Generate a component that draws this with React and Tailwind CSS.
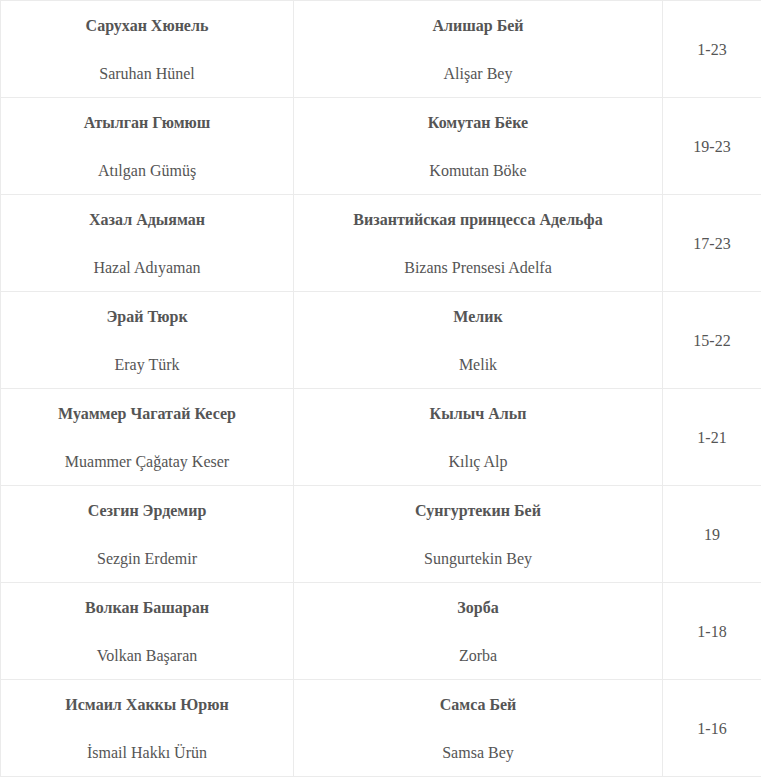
const rows = [
  ['Сарухан Хюнель', 'Saruhan Hünel', 'Алишар Бей', 'Alişar Bey', '1-23'],
  ['Атылган Гюмюш', 'Atılgan Gümüş', 'Комутан Бёке', 'Komutan Böke', '19-23'],
  ['Хазал Адыяман', 'Hazal Adıyaman', 'Византийская принцесса Адельфа', 'Bizans Prensesi Adelfa', '17-23'],
  ['Эрай Тюрк', 'Eray Türk', 'Мелик', 'Melik', '15-22'],
  ['Муаммер Чагатай Кесер', 'Muammer Çağatay Keser', 'Кылыч Альп', 'Kılıç Alp', '1-21'],
  ['Сезгин Эрдемир', 'Sezgin Erdemir', 'Сунгуртекин Бей', 'Sungurtekin Bey', '19'],
  ['Волкан Башаран', 'Volkan Başaran', 'Зорба', 'Zorba', '1-18'],
  ['Исмаил Хаккы Юрюн', 'İsmail Hakkı Ürün', 'Самса Бей', 'Samsa Bey', '1-16'],
]

function NameCell({ ru, tr }) {
  return (
    <td className="border border-[#ebebeb] px-2 pt-[13px] pb-[11px] text-center align-middle">
      <div className="font-bold leading-6">{ru}</div>
      <div className="mt-6 leading-6">{tr}</div>
    </td>
  )
}

export default function App() {
  return (
    <div className="bg-white w-[761px] text-[16px] text-[#555] [font-family:'Liberation_Serif','Times_New_Roman',serif]">
      <table className="w-[761px] border-collapse table-fixed">
        <colgroup>
          <col className="w-[293px]" />
          <col className="w-[369px]" />
          <col className="w-[99px]" />
        </colgroup>
        <tbody>
          {rows.map((r, i) => (
            <tr key={i}>
              <NameCell ru={r[0]} tr={r[1]} />
              <NameCell ru={r[2]} tr={r[3]} />
              <td className="border border-[#ebebeb] px-2 pt-[2px] text-center align-middle leading-6">{r[4]}</td>
            </tr>
          ))}
        </tbody>
      </table>
    </div>
  )
}
